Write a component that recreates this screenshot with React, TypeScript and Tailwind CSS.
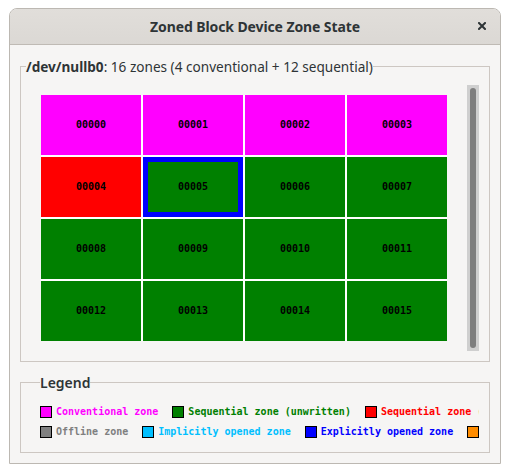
import React from "react";

type Zone = { id: string; color: string; active?: boolean };

const zones: Zone[] = Array.from({ length: 16 }, (_, i) => {
  let color = "bg-[#008000]";
  if (i < 4) color = "bg-[#ff00ff]";
  if (i === 4) color = "bg-[#ff0000]";
  return { id: String(i).padStart(5, "0"), color, active: i === 5 };
});

const legendRows = [
  [
    { label: "Conventional zone", swatch: "bg-[#ff00ff]", text: "text-[#ff00ff]" },
    { label: "Sequential zone (unwritten)", swatch: "bg-[#008000]", text: "text-[#008000]" },
    { label: "Sequential zone (full)", swatch: "bg-[#ff0000]", text: "text-[#ff0000]" },
  ],
  [
    { label: "Offline zone", swatch: "bg-[#808080]", text: "text-[#808080]" },
    { label: "Implicitly opened zone", swatch: "bg-[#00bfff]", text: "text-[#00bfff]" },
    { label: "Explicitly opened zone", swatch: "bg-[#0000ff]", text: "text-[#0000ff]" },
    { label: "Closed zone", swatch: "bg-[#ff8c00]", text: "text-[#ff8c00]" },
  ],
];

const mono = "font-['DejaVu_Sans_Mono',monospace]";

const ZoneCell = ({ zone }: { zone: Zone }) => (
  <div
    className={`w-[100px] h-[60px] flex items-center justify-center ${zone.color} ${
      zone.active ? "border-[5px] border-[#0000ff]" : ""
    }`}
  >
    <span className={`${mono} text-[10px] font-bold text-black leading-none`}>
      {zone.id}
    </span>
  </div>
);

export default function App() {
  return (
    <div className="w-[510px] h-[473px] bg-white pt-[8px] pl-[9px] font-['Noto_Sans',sans-serif] text-[#2e3436]">
      <div className="w-[492px] h-[456px] flex flex-col border border-[#bcb8b2] rounded-t-[8px] overflow-hidden bg-[#f6f5f4]">
        {/* Title bar */}
        <div className="relative h-[36px] shrink-0 flex items-center justify-center bg-gradient-to-b from-[#e1deda] to-[#dbd8d4] border-b border-[#bfbab4]">
          <span className="text-[14px] font-bold leading-none tracking-[-0.1px]">
            Zoned Block Device Zone State
          </span>
          <button className="absolute right-[14px] top-[13px] w-[8px] h-[8px] flex items-center justify-center">
            <svg width="8" height="8" viewBox="0 0 8 8">
              <path
                d="M1 1 L7 7 M7 1 L1 7"
                stroke="#2e3436"
                strokeWidth="2"
                strokeLinecap="square"
              />
            </svg>
          </button>
        </div>

        {/* Body */}
        <div className="flex flex-col gap-[10px] pt-[11px] px-[10px] pb-[10px] min-w-0">
          <fieldset className="min-w-0 border border-[#cdc7c2] px-0 pt-[8px] pb-[10px]">
            <legend className="ml-[5px] h-[21px] leading-[21px] text-[13.6px] whitespace-nowrap">
              <span className="font-bold">/dev/nullb0</span>: 16 zones (4 conventional + 12
              sequential)
            </legend>
            <div className="flex h-[266px] mx-[10px]">
              <div className="flex-1 p-[10px]">
                <div className="grid grid-cols-4 gap-[2px] w-fit bg-white">
                  {zones.map((z) => (
                    <ZoneCell key={z.id} zone={z} />
                  ))}
                </div>
              </div>
              <div className="w-[12px] p-[3px] bg-[#cfcfcf]">
                <div className="h-full w-full rounded-full bg-[#7e7e7e]" />
              </div>
            </div>
          </fieldset>

          <fieldset className="min-w-0 border border-[#cdc7c2] px-0 pt-[9px] pb-[10px]">
            <legend className="ml-[19px] h-[21px] leading-[21px] text-[14px] font-semibold">
              Legend
            </legend>
            <div className="overflow-hidden mx-[10px] pl-[9px] flex flex-col">
              {legendRows.map((row, ri) => (
                <div key={ri} className="h-[20px] flex items-center gap-[14px] whitespace-nowrap">
                  {row.map((item) => (
                    <div key={item.label} className="flex items-center gap-[4px] shrink-0">
                      <span className={`w-[12px] h-[12px] border border-black ${item.swatch}`} />
                      <span className={`${mono} text-[10px] font-bold leading-none ${item.text}`}>
                        {item.label}
                      </span>
                    </div>
                  ))}
                </div>
              ))}
            </div>
          </fieldset>
        </div>
      </div>
    </div>
  );
}
